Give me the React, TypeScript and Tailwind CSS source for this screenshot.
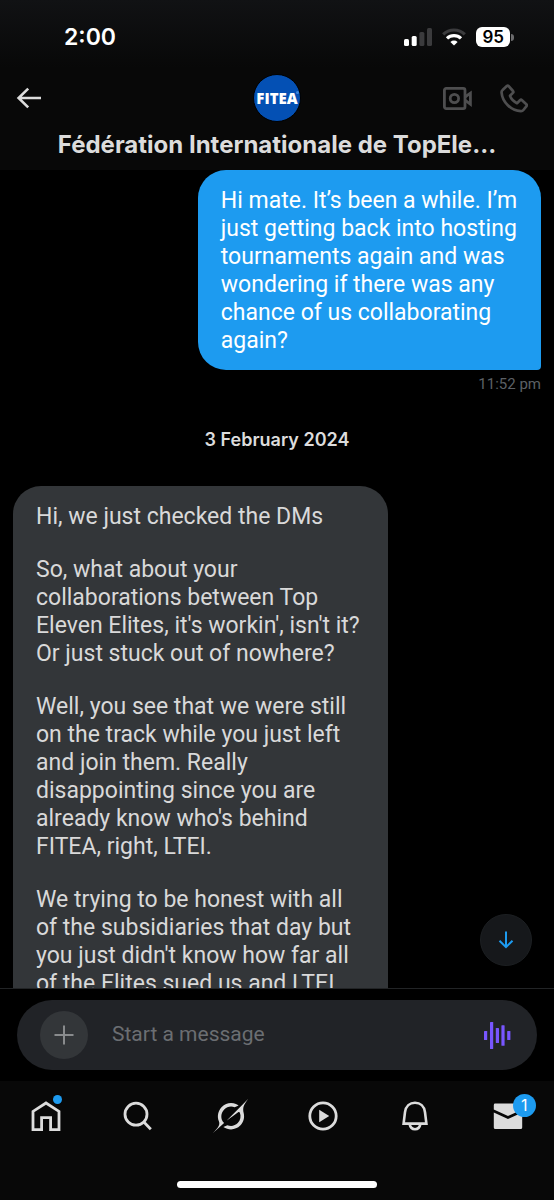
import type { ReactNode } from "react";

const OUTGOING =
  "Hi mate. It’s been a while. I’m just getting back into hosting tournaments again and was wondering if there was any chance of us collaborating again?";

const INCOMING = [
  "Hi, we just checked the DMs",
  "So, what about your collaborations between Top Eleven Elites, it's workin', isn't it? Or just stuck out of nowhere?",
  "Well, you see that we were still on the track while you just left and join them. Really disappointing since you are already know who's behind FITEA, right, LTEI.",
  "We trying to be honest with all of the subsidiaries that day but you just didn't know how far all of the Elites sued us and LTEI.",
];

function StatusBar() {
  return (
    <div className="flex h-[74px] items-center justify-between pl-16 pr-10 text-white">
      <span className="text-[23px] font-semibold leading-7">2:00</span>
      <div className="flex items-center gap-[10px]">
        <svg width="28" height="18" viewBox="0 0 28 18" fill="currentColor" aria-hidden="true">
          <rect x="0" y="11" width="5" height="7" rx="1.5" />
          <rect x="7.7" y="8" width="5" height="10" rx="1.5" />
          <rect x="15.4" y="4" width="5" height="14" rx="1.5" fill="#3b3b3d" />
          <rect x="23" y="0" width="5" height="18" rx="1.5" fill="#3b3b3d" />
        </svg>
        <svg width="24" height="18" viewBox="0 0 24 18" fill="none" strokeWidth="3.2" aria-hidden="true">
          <path d="M1.2 6.4a15.4 15.4 0 0 1 21.6 0" stroke="#3b3b3d" />
          <path d="M5 10.4a10 10 0 0 1 14 0" stroke="currentColor" />
          <path d="M12 17.6l-3.6-3.6a5.2 5.2 0 0 1 7.2 0z" fill="currentColor" />
        </svg>
        <div className="flex items-center gap-px">
          <span className="rounded-[6px] bg-white px-[6px] text-[17px] font-semibold leading-5 text-black">
            95
          </span>
          <span className="h-[7px] w-[3px] rounded-r-full bg-[#6b6b6d]" />
        </div>
      </div>
    </div>
  );
}

function ChatHeader() {
  return (
    <header className="shrink-0 bg-gradient-to-b from-[#111214] via-[#080808] via-40% to-[#080808]">
      <StatusBar />
      <div className="grid grid-cols-3 items-center px-4">
        <button aria-label="Back" className="w-7 text-[#dcdcdc]">
          <svg width="26" height="22" viewBox="0 0 26 22" fill="none" stroke="currentColor" strokeWidth="2.6">
            <path d="M12.2 1.6L2.6 11l9.6 9.4M2.6 11H25" />
          </svg>
        </button>
        <div className="relative flex size-12 items-center justify-center justify-self-center rounded-full border border-black bg-[#0450b4]">
          <span className="font-['Open_Sans',sans-serif] text-[15px] font-extrabold leading-none text-white">
            FITEA
          </span>
          <span className="absolute right-px top-4 size-[3px] rounded-full bg-[#3f86dc]" />
        </div>
        <div className="flex items-center gap-7 justify-self-end pr-[10px] text-[#4e4e4f]">
          <button aria-label="Video call">
            <svg width="29" height="23" viewBox="0 0 29 23" fill="none" stroke="currentColor" strokeWidth="2.8">
              <rect x="1.4" y="1.4" width="20.6" height="20.2" rx="1.8" />
              <circle cx="11.4" cy="11.5" r="4.2" />
              <path d="M22 10l5.4-3.8v11L22 13.2" />
            </svg>
          </button>
          <button aria-label="Voice call">
            <svg width="28" height="29" viewBox="0 0 28 29" fill="none" stroke="currentColor" strokeWidth="2.7" strokeLinejoin="round">
              <path d="M1.6 8.6q-.2-1.6 1-2.6L6.8 2q1-.8 1.9.2L13 7q.8 1-.1 1.9L10 11.8q1.6 4.600 7 7.400l3-3q1-.9 2 0l4.300 4q1 1 .2 2L23.400 26q-1 1.300-2.600 1.200C11 26.500 2.300 18 1.600 8.600z" />
            </svg>
          </button>
        </div>
      </div>
      <h1 className="truncate px-12 pb-[11px] pt-[9px] text-center text-[24px] font-bold leading-7 text-[#dcdcdc]">
        Fédération Internationale de TopEle...
      </h1>
    </header>
  );
}

function Conversation() {
  return (
    <main className="relative min-h-0 flex-1">
      <div className="h-full overflow-y-auto px-[13px] font-['Roboto',sans-serif] text-[23px] leading-7 [scrollbar-width:none]">
        <div className="ml-auto w-[65%] rounded-[28px] rounded-br-[4px] bg-[#1d9bf0] pb-[15px] pl-[23px] pr-5 pt-[17px] text-white">
          <p>{OUTGOING}</p>
        </div>
        <p className="mt-1 text-right text-[15px] leading-5 text-[#5c6065]">11:52 pm</p>
        <h2 className="my-[34px] text-center font-['Inter',sans-serif] text-[18px] font-semibold leading-6 text-[#dcdcdc]">
          3 February 2024
        </h2>
        <div className="flex w-[71%] flex-col gap-[25px] rounded-t-[28px] bg-[#333639] pb-[15px] pl-[23px] pr-5 pt-[17px] text-[#d9d9d9]">
          {INCOMING.map((text) => (
            <p key={text}>{text}</p>
          ))}
        </div>
      </div>
      <button
        aria-label="Scroll to latest"
        className="absolute bottom-[22px] right-[22px] flex size-[52px] items-center justify-center rounded-full border border-[#1c1f22] bg-[#16181b] text-[#1d9bf0]"
      >
        <svg width="16" height="18" viewBox="0 0 16 18" fill="none" stroke="currentColor" strokeWidth="2">
          <path d="M8 .5v15.500M1.500 9.700L8 16.200l6.500-6.500" />
        </svg>
      </button>
    </main>
  );
}

function Composer() {
  return (
    <form className="shrink-0 border-t border-[#222426] bg-black px-[17px] py-[11px]">
      <div className="flex h-[70px] items-center rounded-full bg-[#212327] pl-[23px] pr-[26px]">
        <button type="button" aria-label="Add attachment" className="flex size-12 shrink-0 items-center justify-center rounded-full bg-[#333639] text-[#898b8d]">
          <svg width="20" height="20" viewBox="0 0 20 20" stroke="currentColor" strokeWidth="2">
            <path d="M10 .5v19M.5 10h19" />
          </svg>
        </button>
        <input
          aria-label="Start a message"
          placeholder="Start a message"
          className="min-w-0 flex-1 bg-transparent px-6 font-['Roboto',sans-serif] text-[21px] text-white outline-none placeholder:text-[#6b6e72]"
        />
        <button type="button" aria-label="Record voice message" className="text-[#7856ff]">
          <svg width="27" height="27" viewBox="0 0 27 27" fill="currentColor">
            <rect x="0" y="9" width="3.2" height="9" rx=".6" />
            <rect x="6" y="0" width="3.2" height="27" rx=".6" />
            <rect x="11.8" y="6" width="3.2" height="15" rx=".6" />
            <rect x="17.4" y="3.2" width="3.2" height="20.6" rx=".6" />
            <rect x="23.2" y="9" width="3.2" height="9" rx=".6" />
          </svg>
        </button>
      </div>
    </form>
  );
}

function NavItem({ label, children }: { label: string; children: ReactNode }) {
  return (
    <a href="#" aria-label={label} className="flex h-[38px] flex-1 items-center justify-center">
      <span className="relative">{children}</span>
    </a>
  );
}

function BottomNav() {
  return (
    <footer className="shrink-0 bg-[#080808] pt-4 text-[#dcdcdc]">
      <nav className="flex">
        <NavItem label="Home">
          <svg width="30" height="32" viewBox="0 0 30 32" fill="none" stroke="currentColor" strokeWidth="2.8">
            <path d="M2 29.6V11.4L15 3l13 8.4v18.2h-8.4v-12h-9v12z" />
          </svg>
          <span className="absolute -right-px -top-[5px] size-[9px] rounded-full bg-[#1d9bf0]" />
        </NavItem>
        <NavItem label="Search">
          <svg width="30" height="30" viewBox="0 0 30 30" fill="none" stroke="currentColor" strokeWidth="2.8">
            <circle cx="13" cy="13.2" r="11" />
            <path d="M20.8 21l7 7.2" />
          </svg>
        </NavItem>
        <NavItem label="Grok">
          <svg width="35" height="34" viewBox="0 0 33 32" fill="currentColor">
            <path d="M12.745 20.54l10.97-8.19c.539-.4 1.307-.244 1.564.38 1.349 3.288.746 7.241-1.938 9.955-2.683 2.714-6.417 3.31-9.83 1.954l-3.728 1.745c5.347 3.697 11.84 2.782 15.898-1.324 3.219-3.255 4.216-7.692 3.284-11.693l.008.009c-1.351-5.878.332-8.227 3.782-13.031L33 0l-4.54 4.59v-.014L12.743 20.544m-2.263 1.987c-3.837-3.707-3.175-9.446.1-12.755 2.42-2.449 6.388-3.448 9.852-1.979l3.72-1.737c-.67-.49-1.53-1.017-2.515-1.387-4.455-1.854-9.789-.931-13.41 2.728-3.483 3.523-4.579 8.94-2.697 13.561 1.405 3.454-.899 5.898-3.22 8.364C1.49 30.2.666 31.074 0 32l10.478-9.466" />
          </svg>
        </NavItem>
        <NavItem label="Video">
          <svg width="30" height="30" viewBox="0 0 30 30" fill="none">
            <circle cx="15" cy="15" r="13.2" stroke="currentColor" strokeWidth="2.8" />
            <path d="M11.2 8.8v12.4L21.2 15z" fill="currentColor" />
          </svg>
        </NavItem>
        <NavItem label="Notifications">
          <svg width="28" height="30" viewBox="0 0 28 30" fill="none" stroke="currentColor" strokeWidth="2.6">
            <path d="M2.6 22.6L4 11.2C4.8 5.4 8.8 1.8 14 1.8s9.2 3.6 10 9.4l1.4 11.4z" />
            <path d="M8.6 23c.6 3.4 2.6 5.2 5.4 5.2s4.8-1.8 5.400-5.200" />
          </svg>
        </NavItem>
        <NavItem label="Messages">
          <svg width="30" height="27" viewBox="0 0 30 27" fill="currentColor">
            <path d="M.8 6.4V2Q.8.6 2.200.6h25.600q1.400 0 1.400 1.400v4.400L15 13z" />
            <path d="M.8 9.400L15 16l14.200-6.600v15q0 1.600-1.600 1.600H2.400Q.8 26 .8 24.400z" />
          </svg>
          <span className="absolute -right-[13px] -top-[9px] flex size-[23px] items-center justify-center rounded-full bg-[#1d9bf0] text-[16px] leading-none text-white">
            1
          </span>
        </NavItem>
      </nav>
      <div className="mx-auto mb-3 mt-[46px] h-[7px] w-[36%] rounded-full bg-white" />
    </footer>
  );
}

export default function App() {
  return (
    <div className="flex h-screen flex-col overflow-hidden bg-black font-['Inter',sans-serif]">
      <ChatHeader />
      <Conversation />
      <Composer />
      <BottomNav />
    </div>
  );
}
